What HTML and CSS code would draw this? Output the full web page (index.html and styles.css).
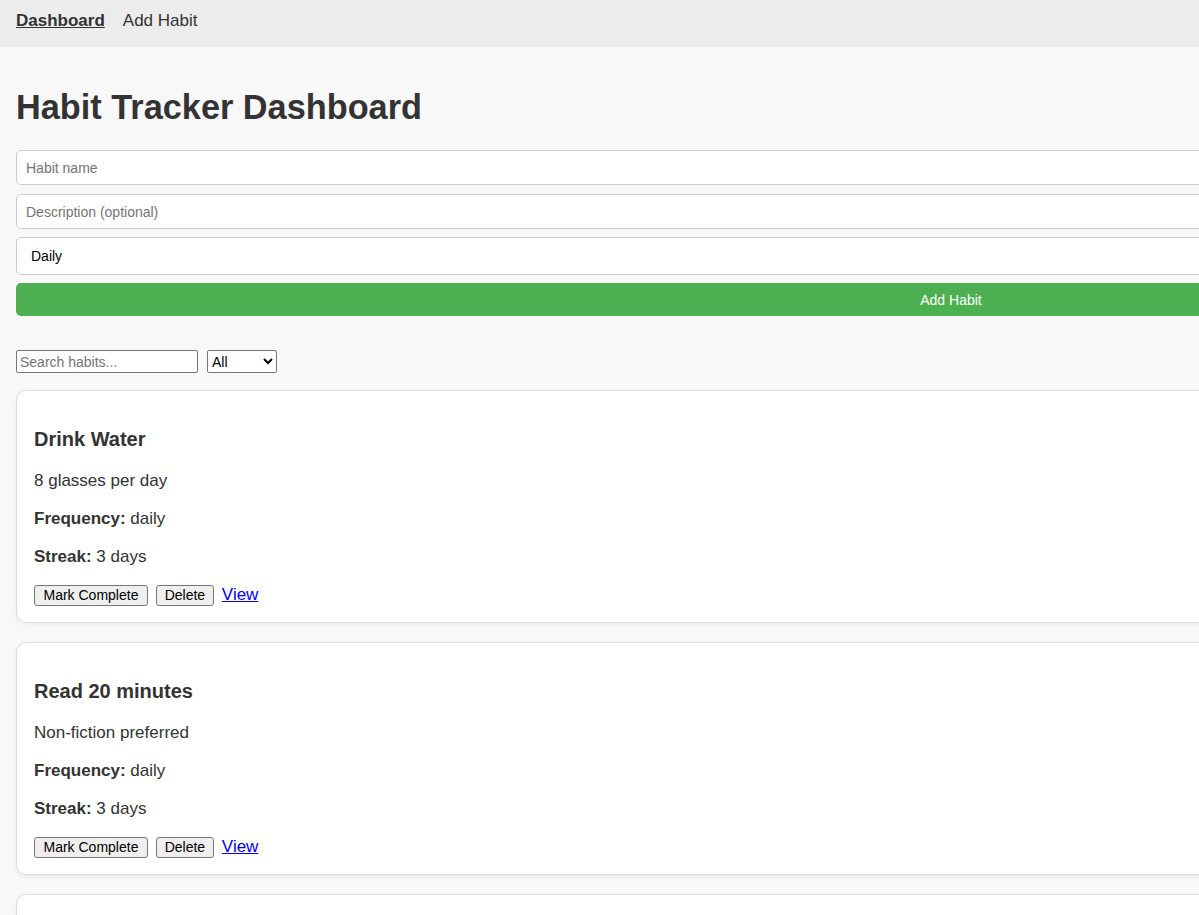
FILE: index.html
```html
<!DOCTYPE html>
<html lang="en">
<head>
<meta charset="utf-8">
<title>Habit Tracker</title>
<link rel="stylesheet" href="styles.css">
</head>
<body>
<nav class="topnav">
  <a class="nav-link nav-link-active" href="#">Dashboard</a>
  <a class="nav-link" href="#">Add Habit</a>
</nav>
<main class="page">
  <h1 class="page-title">Habit Tracker Dashboard</h1>
  <form class="habit-form">
    <input class="field field-text field-first" type="text" placeholder="Habit name">
    <input class="field field-text" type="text" placeholder="Description (optional)">
    <select class="field field-select">
      <option>Daily</option>
      <option>Weekly</option>
      <option>Monthly</option>
    </select>
    <button class="add-btn" type="button">Add Habit</button>
  </form>
  <div class="filters">
    <input class="search" type="text" placeholder="Search habits...">
    <select class="filter-select">
      <option>All</option>
      <option>Daily</option>
      <option>Weekly</option>
    </select>
  </div>
  <section class="habit-list">
    <article class="habit-card">
      <h3 class="habit-name">Drink Water</h3>
      <p class="habit-line">8 glasses per day</p>
      <p class="habit-line"><strong>Frequency:</strong> daily</p>
      <p class="habit-line"><strong>Streak:</strong> 3 days</p>
      <div class="habit-actions">
        <button class="small-btn btn-complete" type="button">Mark Complete</button>
        <button class="small-btn" type="button">Delete</button>
        <a class="view-link" href="#">View</a>
      </div>
    </article>
    <article class="habit-card">
      <h3 class="habit-name">Read 20 minutes</h3>
      <p class="habit-line">Non-fiction preferred</p>
      <p class="habit-line"><strong>Frequency:</strong> daily</p>
      <p class="habit-line"><strong>Streak:</strong> 3 days</p>
      <div class="habit-actions">
        <button class="small-btn btn-complete" type="button">Mark Complete</button>
        <button class="small-btn" type="button">Delete</button>
        <a class="view-link" href="#">View</a>
      </div>
    </article>
    <article class="habit-card">
      <h3 class="habit-name">Morning Walk</h3>
      <p class="habit-line">30 minutes outside</p>
      <p class="habit-line"><strong>Frequency:</strong> daily</p>
      <p class="habit-line"><strong>Streak:</strong> 1 days</p>
      <div class="habit-actions">
        <button class="small-btn btn-complete" type="button">Mark Complete</button>
        <button class="small-btn" type="button">Delete</button>
        <a class="view-link" href="#">View</a>
      </div>
    </article>
  </section>
</main>
</body>
</html>
```

FILE: styles.css
```css
html {
  scrollbar-width: none;
}

body {
  margin: 0;
  background: #f8f8f8;
  color: #333;
  font-family: "Liberation Sans", Arial, sans-serif;
  font-size: 17px;
  line-height: 1.25;
}

.topnav {
  box-sizing: border-box;
  height: 47px;
  padding: 10px 16px 0;
  background: #ececec;
  display: flex;
  gap: 18px;
}

.nav-link {
  color: #333;
  text-decoration: none;
  font-size: 17px;
  line-height: 21px;
}

.nav-link-active {
  font-weight: bold;
  text-decoration: underline;
}

.page {
  width: 1870px;
  padding: 16px;
}

.page-title {
  font-size: 34.3px;
  line-height: 42px;
  font-weight: bold;
  margin: 23px 0 22px;
}

.habit-form {
  display: flex;
  flex-direction: column;
  gap: 8px;
  margin: 0;
}

.field {
  box-sizing: border-box;
  width: 100%;
  margin: 0;
  border: 1px solid #ccc;
  border-radius: 5px;
  background: #fff;
  font-family: "Liberation Sans", Arial, sans-serif;
  font-size: 14px;
  color: #000;
}

.field-text {
  height: 35px;
  padding: 0 9px;
}

.field-first {
  margin-bottom: 1px;
}

.field-text::placeholder {
  color: #757575;
}

.field-select {
  height: 38px;
  padding: 0 10px;
}

.add-btn {
  box-sizing: border-box;
  height: 33px;
  width: 100%;
  border: none;
  border-radius: 5px;
  background: #4caf50;
  color: #fff;
  font-family: "Liberation Sans", Arial, sans-serif;
  font-size: 14px;
}

.filters {
  display: flex;
  align-items: center;
  gap: 9px;
  margin: 34px 0 17px;
}

.search {
  box-sizing: border-box;
  width: 182px;
  height: 23px;
  margin: 0;
  padding: 1px 3px;
  border: 1px solid #767676;
  border-radius: 2px;
  background: #fff;
  font-family: "Liberation Sans", Arial, sans-serif;
  font-size: 14px;
  color: #000;
}

.search::placeholder {
  color: #757575;
}

.filter-select {
  box-sizing: border-box;
  width: 70px;
  height: 23px;
  margin: 0;
  border: 1px solid #767676;
  border-radius: 2px;
  background: #fff;
  font-family: "Liberation Sans", Arial, sans-serif;
  font-size: 14px;
  color: #000;
}

.habit-card {
  background: #fff;
  border: 1px solid #ddd;
  border-radius: 10px;
  padding: 16px 17px;
  margin-bottom: 19px;
  box-shadow: 0 2px 4px rgba(0, 0, 0, 0.05);
}

.habit-name {
  font-size: 20px;
  line-height: 23px;
  font-weight: bold;
  margin: 21px 0 19px;
}

.habit-line {
  margin: 17px 0;
  line-height: 21px;
}

.habit-actions {
  line-height: 21px;
}

.small-btn {
  margin: 0 3px 0 0;
  padding: 1px 8px;
  border: 1px solid #767676;
  border-radius: 3px;
  background: #efefef;
  color: #000;
  font-family: "Liberation Sans", Arial, sans-serif;
  font-size: 14px;
  line-height: 17px;
}

.btn-complete {
  padding: 1px 8.5px;
}

.view-link {
  color: #0000ee;
  text-decoration: underline;
}
```
